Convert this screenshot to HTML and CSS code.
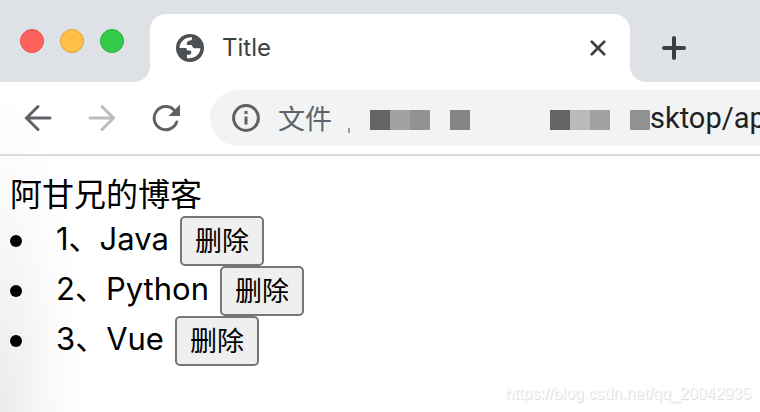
FILE: index.html
```html
<!DOCTYPE html>
<html lang="zh-CN">
<head>
<meta charset="utf-8">
<meta name="viewport" content="width=device-width, initial-scale=1">
<title>Title</title>
<link rel="stylesheet" href="styles.css">
</head>
<body>
<div class="browser">
  <header class="tabstrip">
    <div class="strip-left">
      <button class="light close" aria-label="Close window"></button>
      <button class="light minimize" aria-label="Minimize window"></button>
      <button class="light maximize" aria-label="Maximize window"></button>
    </div>
    <div class="tab">
      <svg class="globe" viewBox="0 0 28 28" aria-hidden="true">
        <circle cx="14" cy="14" r="14" fill="#4c5055"/>
        <path fill="#fff" d="M3.6 14C3.6 8 8.5 3.2 16 3.2C16.5 5.500 15.500 6.500 12.800 6.800C11.500 7 11.500 8.500 10.800 9V10.900H15C16.500 10.900 16.600 14.200 18.500 14.200H24.400C24.300 20 19 25 11 24.200V20.800H13.200C15 20.800 15.200 19.800 15.200 17.500C15.200 16 12.500 16.800 11.200 16.400C10.500 16 11.200 14 9.500 14Z"/>
      </svg>
      <span class="tab-title">Title</span>
      <button class="icon-button" aria-label="Close tab">
        <svg class="cross" viewBox="0 0 18 18"><path d="M2 2L16 16M16 2L2 16"/></svg>
      </button>
    </div>
    <div class="strip-right">
      <button class="icon-button" aria-label="New tab">
        <svg class="plus" viewBox="0 0 24 24"><path d="M12 2V22M2 12H22"/></svg>
      </button>
    </div>
  </header>
  <nav class="toolbar">
    <div class="nav-buttons">
      <button class="icon-button" aria-label="Back">
        <svg class="nav-icon" viewBox="0 0 28 28"><path d="M26 14H3M14 2.500L2.500 14L14 25.500"/></svg>
      </button>
      <button class="icon-button" aria-label="Forward">
        <svg class="nav-icon faded" viewBox="0 0 28 28"><path d="M2 14H25M14 2.500L25.500 14L14 25.500"/></svg>
      </button>
      <button class="icon-button" aria-label="Reload">
        <svg class="nav-icon" viewBox="0 0 28 28"><path d="M24.700 18A11.600 11.600 0 1 1 22.500 6.500"/><path class="solid" d="M28 0.500V12H16.500Z"/></svg>
      </button>
    </div>
    <div class="address">
      <svg class="info" viewBox="0 0 28 28" aria-hidden="true"><circle cx="14" cy="14" r="12.400"/><path d="M14 12.500V20.500M14 7V10"/></svg>
      <span class="scheme">文件</span>
      <span class="sliver"></span>
      <span class="mosaic">
        <i class="s1"></i><i class="s2"></i><i class="s3"></i><i></i><i class="s4"></i><i></i><i></i><i></i><i></i><i class="s1"></i><i class="s5"></i><i class="s2"></i><i></i><i class="s3"></i>
      </span>
      <span class="path">sktop/ap</span>
    </div>
  </nav>
  <main class="page">
    <div class="heading">阿甘兄的博客</div>
    <ul class="list">
      <li><span class="name">1、Java</span><button class="delete">删除</button></li>
      <li><span class="name">2、Python</span><button class="delete">删除</button></li>
      <li><span class="name">3、Vue</span><button class="delete">删除</button></li>
    </ul>
  </main>
  <div class="watermark">https://blog.csdn.net/qq_20042935</div>
</div>
</body>
</html>
```
FILE: styles.css
```css
* { box-sizing: border-box; }

body {
  margin: 0;
  background: #fff;
  color: #000;
  font-family: Inter, "Noto Sans CJK SC", sans-serif;
}

button { margin: 0; font-family: inherit; color: inherit; }

svg { display: block; fill: none; }

.browser {
  position: relative;
  min-height: 100vh;
  overflow: hidden;
  background: radial-gradient(ellipse 84px 330px at 0 412px, #ebebeb, #f3f3f3 35%, #fbfbfb 70%, #fff);
}

.tabstrip { display: flex; height: 82px; background: #fff; }

.strip-left, .strip-right {
  display: flex;
  align-items: center;
  background: #dee1e6;
}

.strip-left {
  width: 150px;
  padding: 0 0 0 20px;
  gap: 16px;
  border-bottom-right-radius: 16px;
}

.strip-right {
  flex: 1;
  padding: 14px 0 0 32px;
  border-bottom-left-radius: 16px;
}

.light { width: 24px; height: 24px; padding: 0; border: 1px solid; border-radius: 50%; }
.close { background: #ff625c; border-color: #e2504b; }
.minimize { background: #ffc045; border-color: #dfa037; }
.maximize { background: #34cb4b; border-color: #28ad38; }

.tab {
  display: flex;
  align-items: center;
  width: 480px;
  padding: 14px 24px 0 26px;
  background: linear-gradient(#dee1e6, #dee1e6) top / 100% 32px no-repeat;
  position: relative;
  isolation: isolate;
}

.tab::before {
  content: "";
  position: absolute;
  z-index: -1;
  inset: 14px 0 0;
  border-radius: 16px 16px 0 0;
  background: #fff;
}

.globe { width: 28px; height: 28px; }
.tab-title { flex: 1; margin-left: 18px; padding-bottom: 2px; font-size: 24px; color: #3c4043; }

.icon-button { display: flex; padding: 0; border: 0; background: none; }
.cross { width: 16px; height: 16px; stroke: #3c4043; stroke-width: 3; stroke-linecap: round; }
.plus { width: 24px; height: 24px; stroke: #3c4043; stroke-width: 4; stroke-linecap: round; }

.toolbar {
  display: flex;
  align-items: center;
  height: 74px;
  border-bottom: 2px solid #dadadf;
}

.nav-buttons { display: flex; flex: none; width: 210px; padding-left: 24px; gap: 36px; }
.nav-icon { width: 28px; height: 28px; stroke: #5f6368; stroke-width: 3; stroke-linecap: round; }
.faded { stroke: #babbbc; }
.solid { fill: #5f6368; stroke: none; }

.address {
  display: flex;
  align-items: center;
  flex: 1;
  min-width: 0;
  height: 56px;
  padding-left: 22px;
  overflow: hidden;
  border-radius: 28px 0 0 28px;
  background: #f1f3f4;
  white-space: nowrap;
}

.info { flex: none; width: 28px; height: 28px; stroke: #5f6062; stroke-width: 3; }
.scheme { width: 54px; margin-left: 18px; padding-bottom: 2px; font-size: 27px; color: #5f6368; }
.sliver { flex: none; width: 2px; height: 5px; margin: 24px 20px 0 16px; background: #9a9b9d; }
.mosaic { display: flex; flex: none; margin-top: 4px; }
.mosaic i { width: 20px; height: 20px; }
.mosaic .s1 { background: #636466; }
.mosaic .s2 { background: #a0a1a3; }
.mosaic .s3 { background: #919294; }
.mosaic .s4 { background: #838486; }
.mosaic .s5 { background: #bababc; }
.path { font-family: Roboto, sans-serif; font-size: 29px; color: #202124; }

.page { padding: 18px 10px; font-size: 31px; }
.heading { font-size: 32px; line-height: 42px; }
.list { margin: 0; padding: 0; list-style: none; }
.list li { display: flex; align-items: center; height: 50px; }
.list li::before {
  content: "";
  width: 12px;
  height: 12px;
  margin-right: 34px;
  border-radius: 50%;
  background: #000;
}

.name { padding-bottom: 10px; }

.delete {
  height: 50px;
  margin-left: 11px;
  padding: 0 13px 4px;
  border: 2px solid #767676;
  border-radius: 5px;
  background: #efefef;
  font-size: 27px;
}

.watermark {
  position: absolute;
  right: 9px;
  bottom: 9px;
  font: 16px/18px "Liberation Sans", sans-serif;
  color: #fcfcfc;
  text-shadow: 1px 1px 1px #d8d8d8;
}
```
